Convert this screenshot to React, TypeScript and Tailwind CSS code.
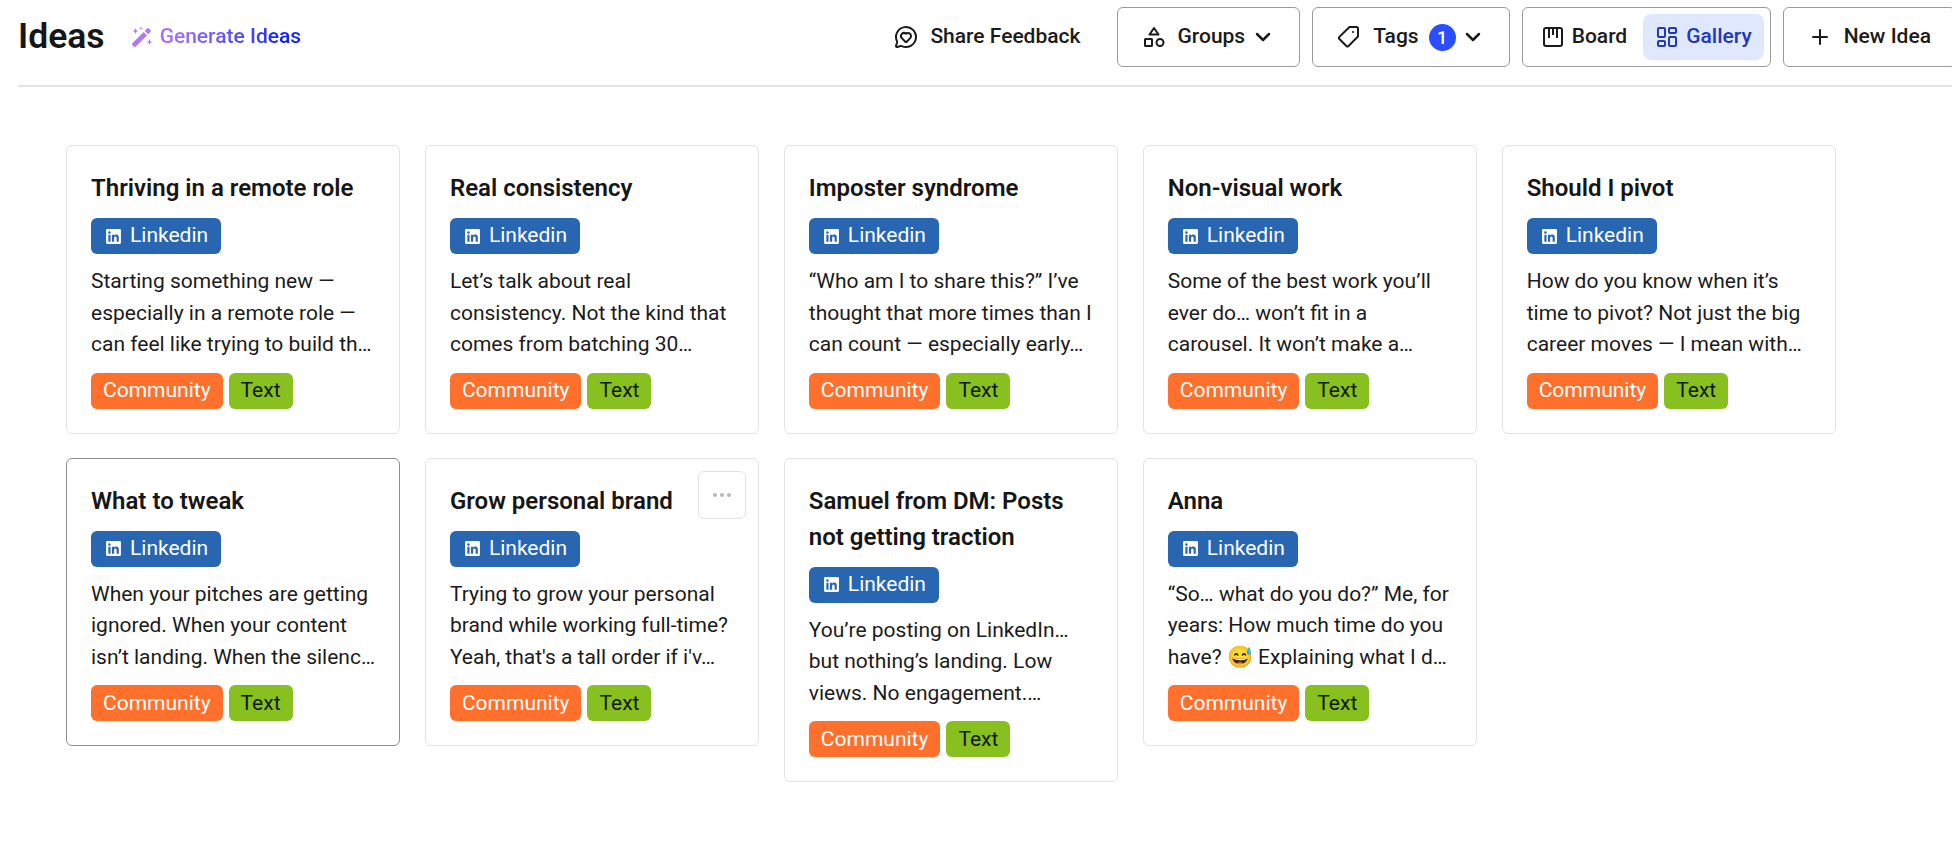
import React from 'react';
import { ChevronDown, LayoutDashboard, MessageCircleHeart, Plus } from 'lucide-react';
import { FaLinkedin } from 'react-icons/fa';

interface Idea {
    title: string;
    body: string;
    menu?: boolean;
    active?: boolean;
}

const ideas: Idea[] = [
    { title: 'Thriving in a remote role', body: 'Starting something new — especially in a remote role — can feel like trying to build th…' },
    { title: 'Real consistency', body: 'Let’s talk about real consistency. Not the kind that comes from batching 30…' },
    { title: 'Imposter syndrome', body: '“Who am I to share this?” I’ve thought that more times than I can count — especially early…' },
    { title: 'Non-visual work', body: 'Some of the best work you’ll ever do… won’t fit in a carousel. It won’t make a…' },
    { title: 'Should I pivot', body: 'How do you know when it’s time to pivot? Not just the big career moves — I mean with…' },
    { title: 'What to tweak', body: 'When your pitches are getting ignored. When your content isn’t landing. When the silenc…', active: true },
    { title: 'Grow personal brand', body: 'Trying to grow your personal brand while working full-time? Yeah, that\'s a tall order if i\'v…', menu: true },
    { title: 'Samuel from DM: Posts not getting traction', body: 'You’re posting on LinkedIn… but nothing’s landing. Low views. No engagement.…' },
    { title: 'Anna', body: '“So… what do you do?” Me, for years: How much time do you have? 😅 Explaining what I d…' },
];

const WandIcon = () => (
    <svg viewBox="0 0 22 22" className="size-[22px] text-[#b376ff]" fill="currentColor">
        <path d="M1.2 17.4 12.6 6l3.4 3.4L4.6 20.8a1.2 1.2 0 0 1-1.7 0l-1.7-1.7a1.2 1.2 0 0 1 0-1.7Z" />
        <path d="M13.8 4.8l2.3-2.3a1.2 1.2 0 0 1 1.7 0l1.7 1.7a1.2 1.2 0 0 1 0 1.7l-2.3 2.3Z" />
        <path d="M4.5 2 5.3 4.2 7.5 5 5.3 5.8 4.5 8 3.7 5.8 1.5 5 3.7 4.2Z" />
        <path d="M10 .5 10.5 1.8 11.8 2.3 10.5 2.8 10 4.1 9.5 2.8 8.2 2.3 9.5 1.8Z" />
        <path d="M18.5 13 19.3 15.2 21.5 16 19.3 16.8 18.5 19 17.7 16.8 15.5 16 17.7 15.2Z" />
    </svg>
);

const GroupsIcon = () => (
    <svg viewBox="0 0 24 24" className="size-6" fill="none" stroke="currentColor" strokeWidth="2" strokeLinejoin="round">
        <path d="M12 3 16.5 9.5H7.5Z" />
        <rect x="3" y="14" width="7" height="7" rx="0.5" />
        <circle cx="18" cy="17.5" r="3.5" />
    </svg>
);

const TagIcon = () => (
    <svg viewBox="0 0 24 24" className="size-6" fill="none" stroke="currentColor" strokeWidth="2" strokeLinejoin="round">
        <path d="M12.5 2H19.5A1.5 1.5 0 0 1 21 3.5V11.5L11.5 21A1.5 1.5 0 0 1 9.4 21L2.4 14A1.5 1.5 0 0 1 2.4 11.9Z" />
        <circle cx="16" cy="7" r="1.1" fill="currentColor" stroke="none" />
    </svg>
);

const BoardIcon = () => (
    <svg viewBox="0 0 24 24" className="size-6" fill="none" stroke="currentColor" strokeWidth="2">
        <rect x="3" y="3" width="18" height="18" rx="2" />
        <path d="M8 3V13M12 3V10M16 3V13" />
    </svg>
);

const Card = ({ idea }: { idea: Idea }) => (
    <div className={`relative self-start rounded-md border bg-white px-6 pt-6 pb-6 ${idea.active ? 'border-[#8f8f8f]' : 'border-[#e3e3e3]'}`}>
        <h3 className="text-[24px] leading-[36px] font-semibold text-[#161616]">{idea.title}</h3>
        <div className="mt-3 flex">
            <span className="flex h-9 items-center gap-[8px] rounded-md bg-[#2866b1] pl-[14px] pr-[13px] text-[21px] text-white">
                <FaLinkedin className="size-[17px]" />
                Linkedin
            </span>
        </div>
        <p className="mt-3 text-[21px] leading-[31.5px] text-[#1b1b1b]">{idea.body}</p>
        <div className="mt-3 flex gap-[6px] text-[21px]">
            <span className="flex h-9 items-center rounded-md bg-[#ff702c] px-3 pt-px text-white">Community</span>
            <span className="flex h-9 items-center rounded-md bg-[#88c01f] px-3 pt-px text-[#0f1a00]">Text</span>
        </div>
        {idea.menu && (
            <button className="absolute top-3 right-3 flex h-12 w-12 items-center justify-center gap-[3px] rounded-md border border-[#e3e3e3] bg-white">
                <span className="size-[4px] rounded-full bg-[#b9b9b9]" />
                <span className="size-[4px] rounded-full bg-[#b9b9b9]" />
                <span className="size-[4px] rounded-full bg-[#b9b9b9]" />
            </button>
        )}
    </div>
);

export default function App() {
    return (
        <div className="h-[860px] w-full overflow-hidden bg-white font-['Roboto',sans-serif]">
            <header className="ml-[18px] flex h-[87px] w-[1938px] items-start justify-between border-b-2 border-[#e2e2e2] pt-[7px]">
                <div className="flex h-[60px] items-center">
                    <h1 className="text-[35.5px] font-semibold text-[#161616]">Ideas</h1>
                    <button className="ml-[26px] flex items-center gap-[7px] text-[21px] font-medium">
                        <WandIcon />
                        <span className="bg-gradient-to-r from-[#a66bff] from-10% to-[#1020ff] to-85% bg-clip-text text-transparent">Generate Ideas</span>
                    </button>
                </div>
                <div className="flex items-center gap-3 text-[21px] font-medium text-[#1b1b1b]">
                    <button className="flex h-[60px] items-center gap-3 px-6">
                        <MessageCircleHeart className="size-6" />
                        Share Feedback
                    </button>
                    <button className="flex h-[60px] items-center rounded-md border border-[#9a9a9a] px-6">
                        <GroupsIcon />
                        <span className="ml-3">Groups</span>
                        <ChevronDown className="ml-[6px] size-6" strokeWidth={2.5} />
                    </button>
                    <button className="flex h-[60px] items-center rounded-md border border-[#9a9a9a] px-6">
                        <TagIcon />
                        <span className="ml-3">Tags</span>
                        <span className="ml-[10px] flex size-[27px] items-center justify-center rounded-full bg-[#2b4fff] text-[18px] text-white">1</span>
                        <ChevronDown className="ml-[5px] size-6" strokeWidth={2.5} />
                    </button>
                    <div className="flex h-[60px] items-center gap-1 rounded-md border border-[#9a9a9a] px-[6px]">
                        <button className="flex items-center gap-[7px] px-3">
                            <BoardIcon />
                            Board
                        </button>
                        <button className="flex h-[46px] items-center gap-[7px] rounded-lg bg-[#e0e8fd] px-3 text-[#2238b8]">
                            <LayoutDashboard className="size-6" />
                            Gallery
                        </button>
                    </div>
                    <button className="flex h-[60px] items-center gap-3 rounded-md border border-[#9a9a9a] px-6">
                        <Plus className="size-6" />
                        New Idea
                    </button>
                </div>
            </header>
            <main className="ml-[66px] mt-[58px] grid w-[1770px] grid-cols-5 gap-x-[24.6px] gap-y-6">
                {ideas.map((idea) => <Card key={idea.title} idea={idea} />)}
            </main>
        </div>
    );
}
